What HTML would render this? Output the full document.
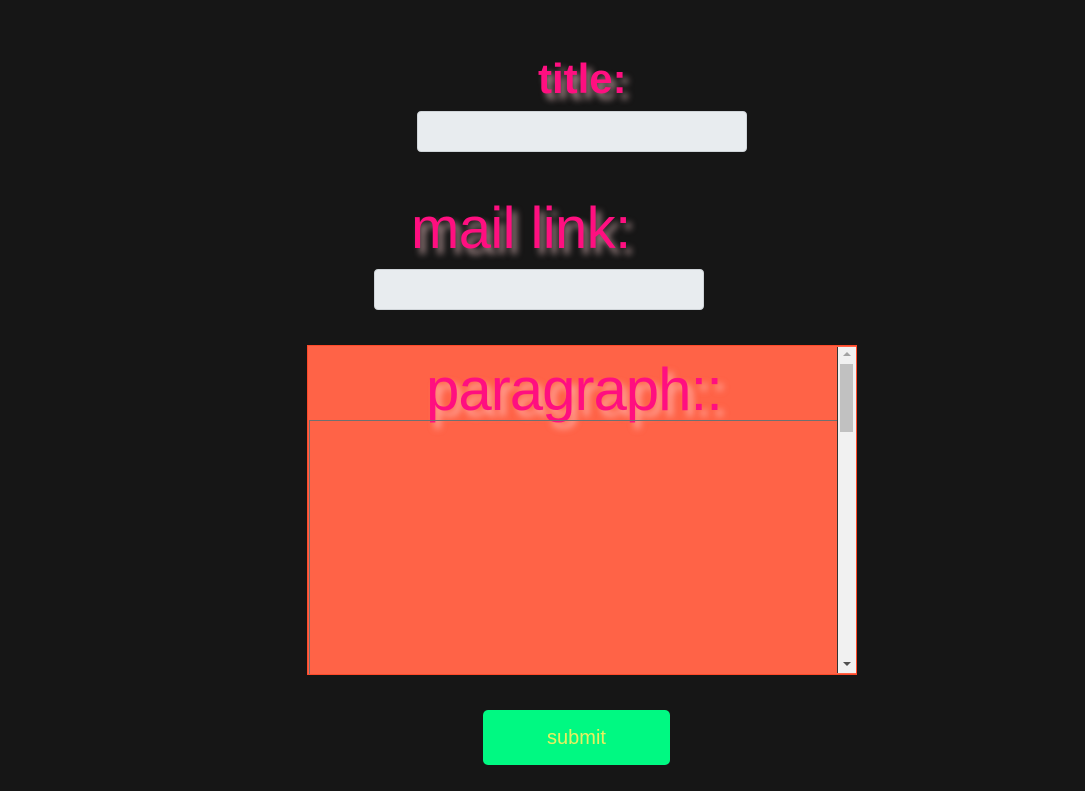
<!DOCTYPE html>
<html><head><style>
body{margin:0;width:1085px;height:791px;background:#161616;position:relative;overflow:hidden;font-family:"Liberation Sans",sans-serif}
.t{position:absolute;color:#ff0f80;white-space:nowrap;line-height:1;text-shadow:5px 6px 7px rgba(255,210,210,.6)}
.in{position:absolute;background:#e8ecef;border-radius:4px;border:1px solid #cfd4d8;box-sizing:border-box}
</style></head><body>
<div class="t" style="left:538px;top:58px;font-size:42px;font-weight:bold">title:</div>
<div class="in" style="left:417px;top:111px;width:330px;height:41px"></div>
<div class="t" style="left:411px;top:200px;font-size:58px;letter-spacing:-0.6px">mail link:</div>
<div class="in" style="left:374px;top:269px;width:330px;height:41px"></div>
<div style="position:absolute;left:307px;top:345px;width:550px;height:330px;background:#ff6347;border:1px solid #ff4a2a;box-sizing:border-box"></div>
<div class="t" style="left:426px;top:360px;font-size:60px;letter-spacing:-1px">paragraph::</div>
<div style="position:absolute;left:309px;top:420px;width:528px;height:254px;border-top:1px solid #707070;border-left:1px solid #707070;box-sizing:border-box"></div>
<div style="position:absolute;left:837px;top:347px;width:18px;height:326px;background:#f1f1f1;border-left:1px solid #333"></div>
<div style="position:absolute;left:840px;top:364px;width:13px;height:68px;background:#c1c1c1"></div>
<div style="position:absolute;left:843px;top:352px;width:0;height:0;border-left:4px solid transparent;border-right:4px solid transparent;border-bottom:4px solid #a3a3a3"></div>
<div style="position:absolute;left:843px;top:662px;width:0;height:0;border-left:4px solid transparent;border-right:4px solid transparent;border-top:4px solid #505050"></div>
<div style="position:absolute;left:483px;top:710px;width:187px;height:55px;background:#00f982;border-radius:5px;color:#e8f060;font-size:20px;text-align:center;line-height:56px">submit</div>
</body></html>
